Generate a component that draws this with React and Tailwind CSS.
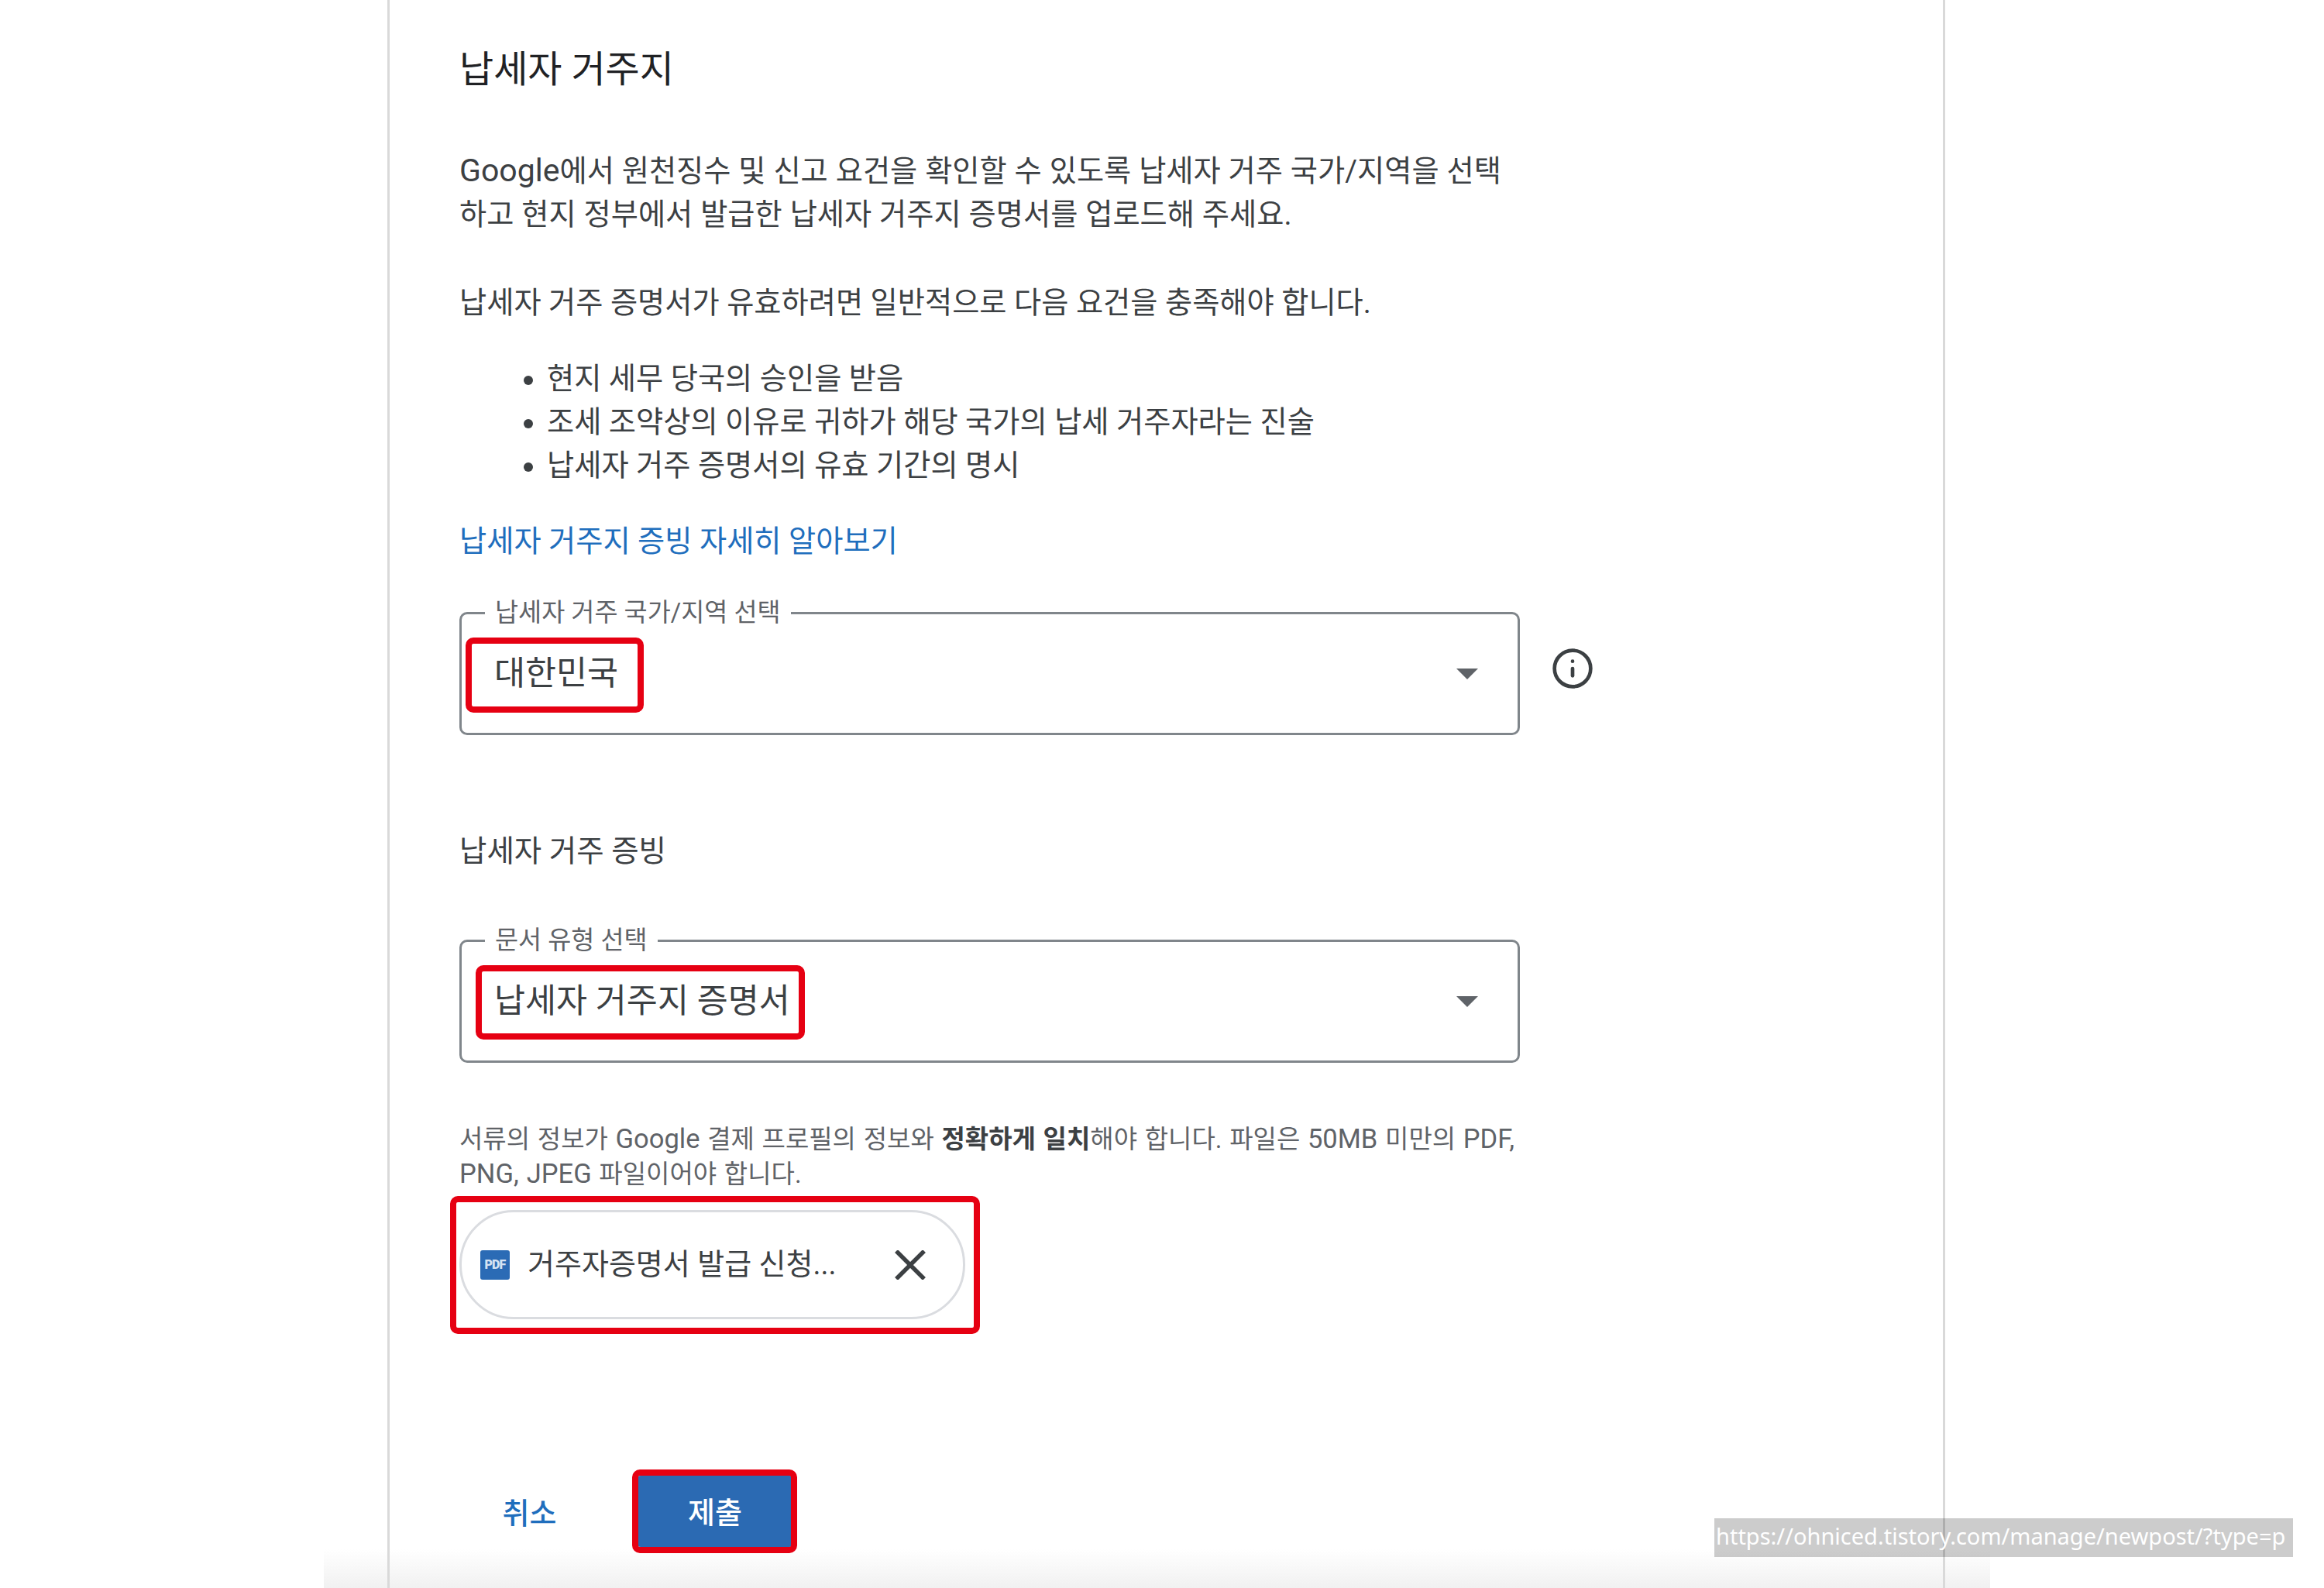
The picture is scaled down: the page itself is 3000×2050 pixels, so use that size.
import { Info } from "lucide-react";

const Select = ({ label, value }) => (
  <div className="relative flex h-[159px] w-[1369px] items-center justify-between rounded-[10px] border-[3px] border-[#80868b] pl-[42px] pr-[51px]">
    <span className="absolute left-[30px] top-[-20px] bg-white px-[13px] text-[32.7px] leading-[36px] text-[#5f6368]">
      {label}
    </span>
    <span className="text-[43.5px] leading-[56px] text-[#3c4043]">{value}</span>
    <svg width="28" height="14" viewBox="0 0 28 14">
      <polygon points="0,0 28,0 14,14" fill="#5f6368" />
    </svg>
  </div>
);

const Callout = ({ className }) => (
  <div className={`absolute rounded-[10px] border-[8px] border-[#e60012] ${className}`} />
);

const Latin = ({ children }) => <span className="text-[34.5px]">{children}</span>;

const App = () => {
  return (
    <div
      className="relative h-[2050px] w-[3000px] overflow-hidden bg-white"
      style={{ fontFamily: 'Roboto, "Noto Sans CJK KR", sans-serif' }}
    >
      {/* footer shade */}
      <div className="absolute bottom-0 left-[418px] h-[50px] w-[2151px] bg-gradient-to-b from-white to-[#f1f1f1]" />

      <div className="relative ml-[500px] h-[2050px] w-[2011px] border-x-[3px] border-[#d9d9d9] pl-[90px] pt-[58px]">
        <h1 className="text-[48px] leading-[64px] text-[#202124]">납세자 거주지</h1>

        <p className="mt-[70px] text-[38.25px] leading-[56px] text-[#3c4043] [word-spacing:0.4px]">
          <span className="text-[41px]">Google</span>에서 원천징수 및 신고 요건을 확인할 수 있도록 납세자 거주 국가/지역을 선택
          <br />
          하고 현지 정부에서 발급한 납세자 거주지 증명서를 업로드해 주세요.
        </p>
        <p className="mt-[58px] text-[38.25px] leading-[56px] text-[#3c4043]">
          납세자 거주 증명서가 유효하려면 일반적으로 다음 요건을 충족해야 합니다.
        </p>
        <ul className="mt-[42px] list-disc pl-[113px] text-[38.25px] leading-[56px] text-[#3c4043]">
          <li>현지 세무 당국의 승인을 받음</li>
          <li>조세 조약상의 이유로 귀하가 해당 국가의 납세 거주자라는 진술</li>
          <li>납세자 거주 증명서의 유효 기간의 명시</li>
        </ul>
        <a className="mt-[42px] block text-[38.25px] leading-[56px] text-[#1f6ebd]">
          납세자 거주지 증빙 자세히 알아보기
        </a>

        <div className="mt-[63px] flex items-start">
          <Select label="납세자 거주 국가/지역 선택" value="대한민국" />
          <Info size={56} strokeWidth={2} className="ml-[40px] mt-[45px] text-[#3c4043]" />
        </div>

        <h2 className="mt-[122px] text-[38.5px] leading-[56px] text-[#3c4043]">납세자 거주 증빙</h2>

        <div className="mt-[86px]">
          <Select label="문서 유형 선택" value="납세자 거주지 증명서" />
        </div>

        <p className="mt-[76px] w-[1372px] text-[33px] leading-[45px] text-[#5f6368] [word-spacing:1.5px]">
          서류의 정보가 <Latin>Google</Latin> 결제 프로필의 정보와 <b className="font-bold text-[#3c4043]">정확하게 일치</b>해야 합니다. 파일은 <Latin>50MB</Latin> 미만의 <Latin>PDF,</Latin>
          <br />
          <Latin>PNG, JPEG</Latin> 파일이어야 합니다.
        </p>

        <div className="mt-[24px] flex h-[141px] w-[653px] items-center rounded-[70px] border-[3px] border-[#dadce0] pl-[24px]">
          <div className="flex h-[38px] w-[38px] items-center justify-center rounded-[3px] bg-[#2b6bb5] text-[16px] font-black leading-none tracking-tighter text-[#d5e3f3]">
            PDF
          </div>
          <span className="ml-[23px] w-[401px] whitespace-nowrap pb-[2px] text-[38px] leading-[50px] text-[#3c4043]">
            거주자증명서 발급 신청...
          </span>
          <svg className="ml-[73px]" width="40" height="38" viewBox="0 0 40 38">
            <path d="M2 1 L38 37 M38 1 L2 37" stroke="#3c4043" strokeWidth="5.5" fill="none" />
          </svg>
        </div>

        <div className="mt-[202px] flex items-center">
          <button className="ml-[54px] w-[73px] whitespace-nowrap pt-[6px] text-[38px] font-medium leading-[50px] text-[#1f6ebd]">
            취소
          </button>
          <button className="ml-[103px] h-[92px] w-[200px] rounded-[4px] bg-[#2b6ab3] pt-[4px] text-[38px] font-medium text-white">
            제출
          </button>
        </div>
      </div>

      {/* annotations drawn over the page */}
      <Callout className="left-[601px] top-[823px] h-[97px] w-[230px]" />
      <Callout className="left-[614px] top-[1246px] h-[96px] w-[425px]" />
      <Callout className="left-[581px] top-[1544px] h-[178px] w-[684px]" />
      <Callout className="left-[816px] top-[1897px] h-[108px] w-[213px]" />

      {/* status bubble */}
      <div
        className="absolute left-[2213px] top-[1960px] h-[50px] w-[747px] overflow-hidden whitespace-nowrap bg-black/20 pl-[2px] text-[29px] leading-[46px] text-white"
        style={{ fontFamily: '"Noto Sans", sans-serif' }}
      >
        https://ohniced.tistory.com/manage/newpost/?type=p
      </div>
    </div>
  );
};

export default App;
